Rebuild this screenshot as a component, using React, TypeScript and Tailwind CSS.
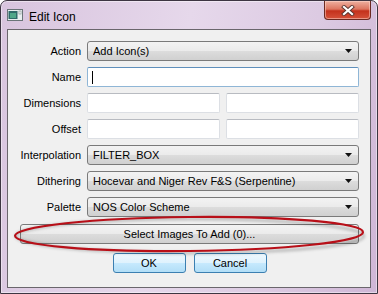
import { ReactNode } from 'react';

function Arrow() {
  return (
    <svg width="7" height="4" viewBox="0 0 7 4" className="shrink-0">
      <path d="M0 0 H7 L3.5 4 Z" fill="#111" />
    </svg>
  );
}

function Combo({ value }: { value: string }) {
  return (
    <div className="h-[20px] flex-1 flex items-center pl-[5px] pr-[6px] rounded-[3px] border border-[#7a7a7a] bg-[linear-gradient(#f3f3f3_0%,#ebebeb_48%,#dcdcdc_52%,#d0d0d0_100%)] text-[11px] text-black">
      <span className="flex-1 truncate">{value}</span>
      <Arrow />
    </div>
  );
}

function TextBox({ focused, children }: { focused?: boolean; children?: ReactNode }) {
  return (
    <div
      className={
        focused
          ? 'h-[20px] flex-1 flex items-center pl-[4px] rounded-[2px] border border-[#8fb6d6] border-t-[#5f8fbb] bg-white'
          : 'h-[20px] flex-1 flex items-center pl-[4px] rounded-[2px] border border-[#dcdfe4] border-t-[#b8bbc1] bg-white'
      }
    >
      {children}
    </div>
  );
}

function Row({ label, children }: { label: string; children: ReactNode }) {
  return (
    <div className="flex items-center gap-[6px] h-[20px]">
      <div className="w-[61px] text-right text-[11px] text-black whitespace-nowrap">{label}</div>
      <div className="flex-1 flex gap-[6px]">{children}</div>
    </div>
  );
}

function WinIcon() {
  return (
    <svg width="16" height="12" viewBox="0 0 16 12">
      <rect x="0.5" y="0.5" width="15" height="11" fill="#e8eef0" stroke="#6a7478" />
      <rect x="1.5" y="2" width="9" height="8" fill="#2f6b6a" />
      <rect x="3" y="4" width="6" height="5" fill="#4fa78a" />
      <rect x="12" y="2" width="2" height="3" fill="#fff" stroke="#7a8a8c" strokeWidth="0.6" />
    </svg>
  );
}

function CloseBtn() {
  return (
    <div className="w-[47px] h-[19px] rounded-b-[4px] border border-t-0 border-[#6b2a22] bg-[linear-gradient(#eeb0a0_0%,#dc7560_45%,#c4311c_55%,#d5513a_100%)] flex items-center justify-center shadow-[inset_0_0_0_1px_rgba(255,220,210,0.5)]">
      <svg width="14" height="11" viewBox="0 0 14 11">
        <path d="M3 2 L11 9 M11 2 L3 9" stroke="#5b3530" strokeWidth="4" strokeLinecap="square" />
        <path d="M3 2 L11 9 M11 2 L3 9" stroke="#ffffff" strokeWidth="2.2" strokeLinecap="square" />
      </svg>
    </div>
  );
}

export default function App() {
  return (
    <div className="relative w-[378px] h-[294px] overflow-hidden bg-white font-['Liberation_Sans',Arial,sans-serif]">
      <div className="h-full flex flex-col rounded-t-[7px] border border-[#3d3542] bg-[linear-gradient(100deg,#d8c4de_0%,#e6d8eb_45%,#dccae2_75%,#cfb6d6_100%)] shadow-[inset_0_0_0_1px_rgba(255,255,255,0.45)]">
        {/* title bar */}
        <div className="h-[28px] flex items-start pl-[6px] pr-[6px]">
          <div className="mt-[8px]">
            <WinIcon />
          </div>
          <div className="ml-[6px] mt-[7px] text-[12px] text-black">Edit Icon</div>
          <div className="ml-auto">
            <CloseBtn />
          </div>
        </div>

        {/* client area */}
        <div className="flex-1 mx-[6px] mb-[5px] border border-[#6a666c] bg-[#f0f0f0] pl-[12px] pr-[11px] pt-[11px] flex flex-col">
          <div className="flex flex-col gap-[6px]">
            <Row label="Action">
              <Combo value="Add Icon(s)" />
            </Row>
            <Row label="Name">
              <TextBox focused>
                <div className="w-px h-[13px] bg-black" />
              </TextBox>
            </Row>
            <Row label="Dimensions">
              <TextBox />
              <TextBox />
            </Row>
            <Row label="Offset">
              <TextBox />
              <TextBox />
            </Row>
            <Row label="Interpolation">
              <Combo value="FILTER_BOX" />
            </Row>
            <Row label="Dithering">
              <Combo value="Hocevar and Niger Rev F&S (Serpentine)" />
            </Row>
            <Row label="Palette">
              <Combo value="NOS Color Scheme" />
            </Row>
          </div>

          <div className="mt-[7px] h-[20px] flex items-center justify-center rounded-[3px] border border-[#7a7a7a] bg-[linear-gradient(#f3f3f3_0%,#ebebeb_48%,#dcdcdc_52%,#d0d0d0_100%)] text-[11px] text-black">
            Select Images To Add (0)...
          </div>

          <div className="mt-[9px] flex justify-center gap-[8px]">
            <div className="w-[73px] h-[20px] flex items-center justify-center rounded-[3px] border border-[#3c7fb1] bg-[linear-gradient(#eef8fe_0%,#dff2fd_48%,#c6e9fd_52%,#b2def7_100%)] text-[11px] text-black">
              OK
            </div>
            <div className="w-[73px] h-[20px] flex items-center justify-center rounded-[3px] border border-[#3c7fb1] bg-[linear-gradient(#eef8fe_0%,#dff2fd_48%,#c6e9fd_52%,#b2def7_100%)] text-[11px] text-black">
              Cancel
            </div>
          </div>
        </div>
      </div>

      {/* red highlight ellipse drawn over the dialog */}
      <svg className="absolute inset-0 pointer-events-none" width="378" height="294" viewBox="0 0 378 294">
        <defs>
          <filter id="sh" x="-10%" y="-50%" width="120%" height="200%">
            <feGaussianBlur stdDeviation="1.5" />
          </filter>
        </defs>
        <ellipse cx="190" cy="236" rx="174" ry="17" fill="none" stroke="#000" strokeOpacity="0.25" strokeWidth="2.5" filter="url(#sh)" />
        <ellipse cx="189" cy="234" rx="174" ry="17" fill="none" stroke="#b80f18" strokeWidth="2.2" transform="rotate(-0.6 189 234)" />
      </svg>
    </div>
  );
}
